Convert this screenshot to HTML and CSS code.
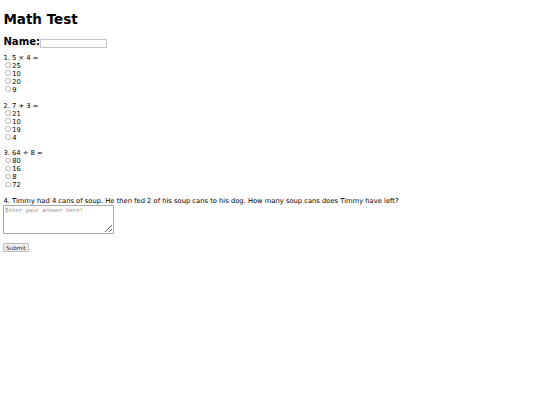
FILE: index.html
```html
<!DOCTYPE html>
<html>
<head>
<meta charset="utf-8">
<title>Math Test</title>
<link rel="stylesheet" href="styles.css">
</head>
<body>
<h1 class="title">Math Test</h1>
<h2 class="name-row">Name:<input class="name-input" type="text"></h2>
<form class="test">
  <div class="question">
    <span class="q-text">1. 5 × 4 =</span><br>
    <label class="opt"><input type="radio" name="q1">25</label><br>
    <label class="opt"><input type="radio" name="q1">10</label><br>
    <label class="opt"><input type="radio" name="q1">20</label><br>
    <label class="opt"><input type="radio" name="q1">9</label>
  </div>
  <div class="question">
    <span class="q-text">2. 7 + 3 =</span><br>
    <label class="opt"><input type="radio" name="q2">21</label><br>
    <label class="opt"><input type="radio" name="q2">10</label><br>
    <label class="opt"><input type="radio" name="q2">19</label><br>
    <label class="opt"><input type="radio" name="q2">4</label>
  </div>
  <div class="question">
    <span class="q-text">3. 64 ÷ 8 =</span><br>
    <label class="opt"><input type="radio" name="q3">80</label><br>
    <label class="opt"><input type="radio" name="q3">16</label><br>
    <label class="opt"><input type="radio" name="q3">8</label><br>
    <label class="opt"><input type="radio" name="q3">72</label>
  </div>
  <div class="question">
    <span class="q-text">4. Timmy had 4 cans of soup. He then fed 2 of his soup cans to his dog. How many soup cans does Timmy have left?</span><br>
    <textarea class="answer" placeholder="Enter your answer here!"></textarea>
  </div>
  <div class="actions">
    <input class="submit" type="submit" value="Submit">
  </div>
</form>
</body>
</html>
```

FILE: styles.css
```css
html { zoom: 0.421875; }
body {
  margin: 8px;
  font-family: "DejaVu Sans", Verdana, sans-serif;
  font-size: 16px;
  color: #000;
  background: #fff;
}
.title {
  font-size: 32px;
  font-weight: bold;
  margin: 19px 0 21.44px;
}
.name-row {
  font-size: 24px;
  font-weight: bold;
  margin: 19.92px 0 14px;
}
.name-input {
  width: 159px;
  height: 21px;
  box-sizing: border-box;
  font-size: 13.33px;
  border: 2px solid #c4c4c4;
  border-radius: 2px;
  background: #fff;
  padding: 1px 2px;
}
.test {
  margin: 0;
}
.question {
  margin-bottom: 18.6px;
}
.opt input {
  appearance: none;
  -webkit-appearance: none;
  box-sizing: border-box;
  margin: 0 3px 0 5px;
  width: 13px;
  height: 13px;
  border: 2px solid #b4b4b4;
  border-radius: 50%;
  background: #fff;
}
.answer {
  width: 263px;
  height: 67px;
  box-sizing: border-box;
  font-family: "DejaVu Sans Mono", monospace;
  font-size: 13.33px;
  margin-top: 0;
  border: 2px solid #a8a8a8;
  border-radius: 2px;
  padding: 2px;
}
.answer::placeholder {
  color: #8a8a8a;
}
.actions {
  margin-top: 10px;
}
.submit {
  font-size: 13.33px;
  font-family: "DejaVu Sans", sans-serif;
  color: #222;
  background: #efefef;
  border: 2px solid #b8b8b8;
  border-radius: 3px;
  padding: 1px 4px;
}
```
